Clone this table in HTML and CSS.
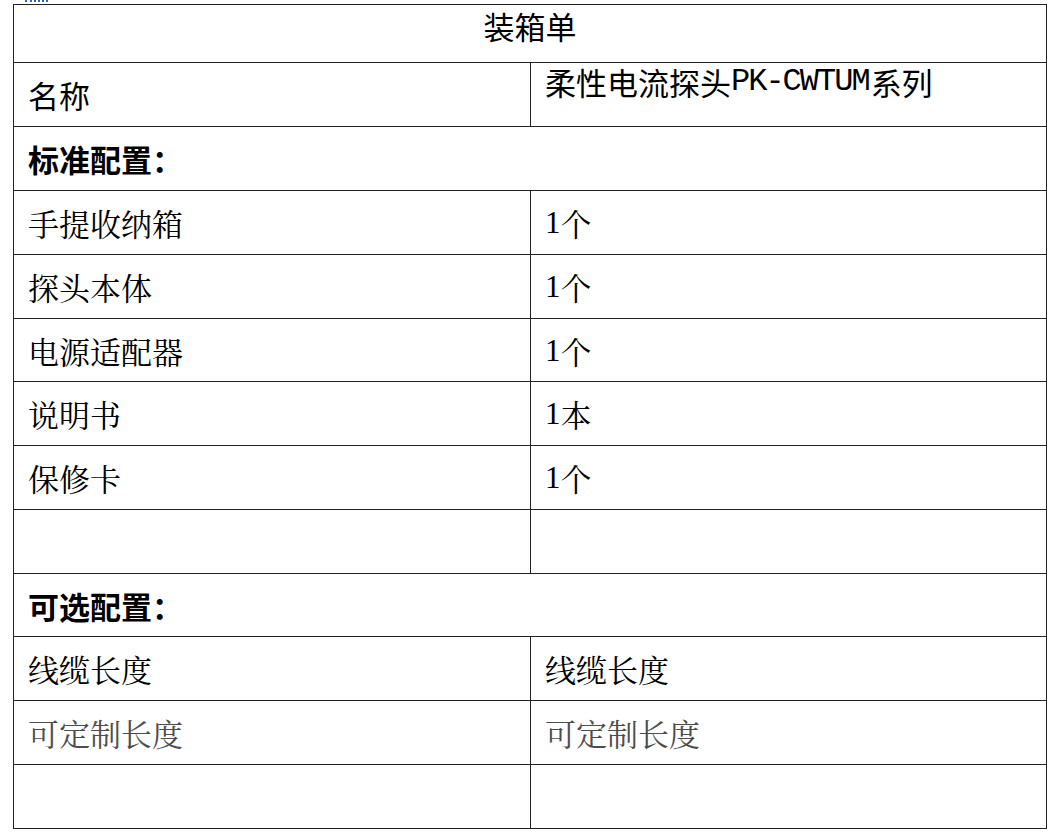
FILE: index.html
```html
<!DOCTYPE html>
<html lang="zh-CN">
<head>
<meta charset="utf-8">
<title>装箱单</title>
<link rel="stylesheet" href="styles.css">
</head>
<body>
<div class="peek"><span class="specks"></span></div>
<div class="sheet">
  <div class="cell title span">装箱单</div>

  <div class="cell head">名称</div>
  <div class="cell head top">柔性电流探头<span class="mono">PK-CWTUM</span>系列</div>

  <div class="cell bold span">标准配置：</div>

  <div class="cell">手提收纳箱</div>
  <div class="cell"><span class="num">1</span>个</div>

  <div class="cell">探头本体</div>
  <div class="cell"><span class="num">1</span>个</div>

  <div class="cell">电源适配器</div>
  <div class="cell"><span class="num">1</span>个</div>

  <div class="cell">说明书</div>
  <div class="cell"><span class="num">1</span>本</div>

  <div class="cell">保修卡</div>
  <div class="cell"><span class="num">1</span>个</div>

  <div class="cell"></div>
  <div class="cell"></div>

  <div class="cell bold span">可选配置：</div>

  <div class="cell">线缆长度</div>
  <div class="cell">线缆长度</div>

  <div class="cell muted">可定制长度</div>
  <div class="cell muted">可定制长度</div>

  <div class="cell"></div>
  <div class="cell"></div>
</div>
</body>
</html>
```

FILE: styles.css
```css
html, body {
  margin: 0;
  padding: 0;
  background: #ffffff;
}

body {
  font-family: "Noto Serif CJK SC", "Liberation Serif", "Noto Sans CJK SC", serif;
  color: #000000;
}

.peek {
  height: 4px;
  display: flex;
  align-items: flex-start;
  padding-left: 25px;
}

.specks {
  width: 23px;
  height: 0;
  border-top: 2px dotted #3a5db5;
}

.sheet {
  margin-left: 13px;
  width: 1034px;
  box-sizing: border-box;
  border-top: 1px solid #222222;
  border-left: 1px solid #222222;
  display: grid;
  grid-template-columns: 517px 516px;
  grid-template-rows: 58px 64px 64px 64px 64px 63px 64px 64px 64px 63px 64px 64px 64px;
}

.cell {
  box-sizing: border-box;
  border-right: 1px solid #222222;
  border-bottom: 1px solid #222222;
  padding-left: 14px;
  display: flex;
  align-items: center;
  font-size: 31px;
  line-height: 1;
  white-space: nowrap;
}

.span {
  grid-column: 1 / 3;
}

.title {
  justify-content: center;
  align-items: flex-start;
  padding: 5px 0 0 0;
  font-family: "Noto Sans CJK SC", sans-serif;
}

.head {
  font-family: "Noto Sans CJK SC", sans-serif;
}

.top {
  align-items: flex-start;
  padding-top: 3px;
}

.mono {
  font-family: "Liberation Mono", monospace;
  font-size: 32px;
  letter-spacing: -2px;
  margin-right: 2px;
}

.num {
  font-family: "Liberation Serif", serif;
}

.bold {
  font-family: "Noto Sans CJK SC", sans-serif;
  font-weight: 700;
}

.muted {
  color: #4d4d4d;
}
```
